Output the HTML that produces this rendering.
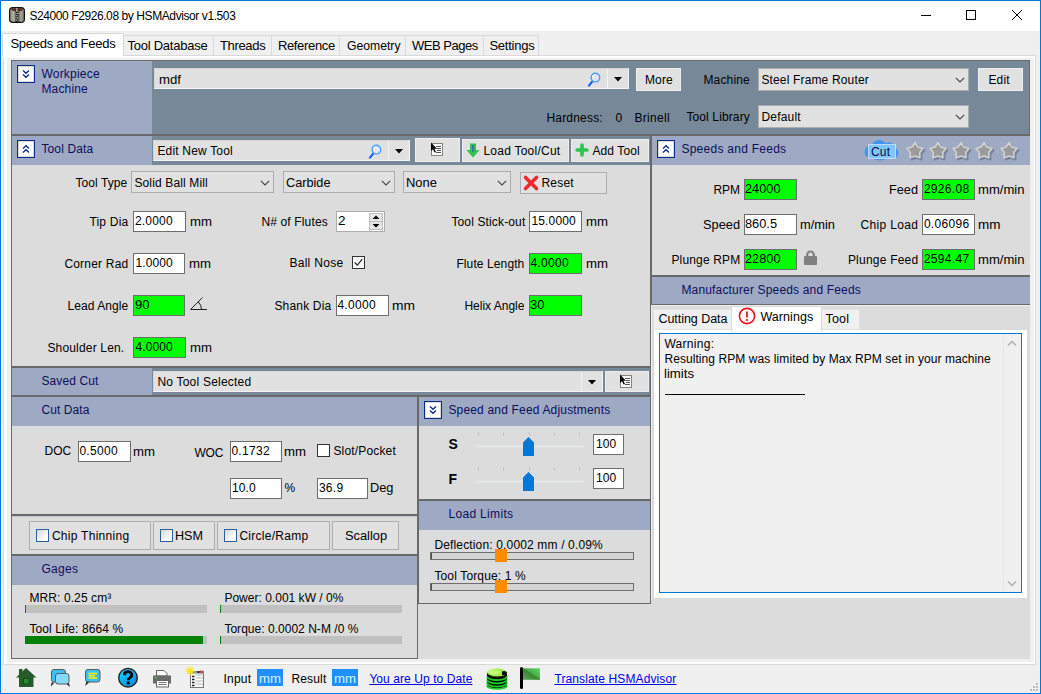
<!DOCTYPE html>
<html><head><meta charset="utf-8"><title>HSMAdvisor</title>
<style>
html,body{margin:0;padding:0;}
body{width:1041px;height:694px;position:relative;overflow:hidden;background:#f0f0f0;font-family:'Liberation Sans', sans-serif;font-size:12px;}
div,svg,.t{position:absolute;}
div{box-sizing:border-box;}
.t{white-space:pre;line-height:16px;}
svg{overflow:visible;}
</style></head><body>
<div style="left:0px;top:0px;width:1041px;height:694px;background:#f0f0f0;"></div>
<div style="left:1px;top:1px;width:1039px;height:30px;background:#ffffff;"></div>
<div style="left:3px;top:55px;width:1033px;height:610px;background:#ffffff;box-shadow:inset 0 0 0 1px #d9d9d9;"></div>
<div style="left:7px;top:58px;width:1027px;height:604px;background:#f0f0f0;"></div>
<div style="left:11px;top:60px;width:1019px;height:599px;background:#dcdcdc;"></div>
<div style="left:123px;top:35px;width:91px;height:21px;background:#f0f0f0;box-shadow:inset 0 0 0 1px #d9d9d9;"></div>
<span class="t" style="left:127.40px;top:38.15px;font-size:13px;font-weight:normal;color:#000;letter-spacing:-0.240px;">Tool Database</span>
<div style="left:213px;top:35px;width:59px;height:21px;background:#f0f0f0;box-shadow:inset 0 0 0 1px #d9d9d9;"></div>
<span class="t" style="left:219.90px;top:38.15px;font-size:13px;font-weight:normal;color:#000;letter-spacing:-0.315px;">Threads</span>
<div style="left:271px;top:35px;width:69px;height:21px;background:#f0f0f0;box-shadow:inset 0 0 0 1px #d9d9d9;"></div>
<span class="t" style="left:277.90px;top:38.15px;font-size:13px;font-weight:normal;color:#000;letter-spacing:-0.332px;">Reference</span>
<div style="left:339px;top:35px;width:67px;height:21px;background:#f0f0f0;box-shadow:inset 0 0 0 1px #d9d9d9;"></div>
<span class="t" style="left:346.90px;top:38.15px;transform:scaleX(0.9373);transform-origin:0 0;font-size:13px;font-weight:normal;color:#000;letter-spacing:0.000px;">Geometry</span>
<div style="left:405px;top:35px;width:79px;height:21px;background:#f0f0f0;box-shadow:inset 0 0 0 1px #d9d9d9;"></div>
<span class="t" style="left:411.90px;top:38.15px;font-size:13px;font-weight:normal;color:#000;letter-spacing:-0.455px;">WEB Pages</span>
<div style="left:483px;top:35px;width:56px;height:21px;background:#f0f0f0;box-shadow:inset 0 0 0 1px #d9d9d9;"></div>
<span class="t" style="left:489.40px;top:38.15px;font-size:13px;font-weight:normal;color:#000;letter-spacing:-0.248px;">Settings</span>
<div style="left:2px;top:33px;width:122px;height:23px;background:#ffffff;box-shadow:inset 0 0 0 1px #d9d9d9;border-bottom:0;"></div>
<div style="left:3px;top:55px;width:120px;height:3px;background:#ffffff;"></div>
<span class="t" style="left:10.40px;top:36.15px;font-size:13px;font-weight:normal;color:#000;letter-spacing:-0.259px;">Speeds and Feeds</span>
<span class="t" style="left:29.40px;top:8.14px;font-size:12px;font-weight:normal;color:#000;letter-spacing:-0.411px;">S24000 F2926.08 by HSMAdvisor v1.503</span>
<svg style="left:9px;top:7px" width="16" height="16" viewBox="0 0 16 16"><defs><linearGradient id="tg" x1="0" y1="0" x2="1" y2="0"><stop offset="0" stop-color="#8a8a7c"/><stop offset="0.3" stop-color="#b4b4a6"/><stop offset="0.45" stop-color="#4a4840"/><stop offset="0.55" stop-color="#4a4840"/><stop offset="0.75" stop-color="#a6a698"/><stop offset="1" stop-color="#76766a"/></linearGradient></defs><rect x="0.6" y="0.6" width="14.8" height="14.8" rx="3.2" fill="url(#tg)" stroke="#141210" stroke-width="1.2"/><path d="M2.5 1.2H13.5V3.2L9.5 4.5H6.5L2.5 3.2Z" fill="#4a2c22"/><rect x="7.3" y="1" width="1.2" height="4" fill="#d8b8a8"/><path d="M8 5V14.5" stroke="#1a1816" stroke-width="2.2"/><path d="M7.6 6.5H9M7 8.7H8.4M7.6 10.9H9M7 13H8.4" stroke="#e8e6da" stroke-width="1.1"/></svg>
<svg style="left:915px;top:5px" width="115" height="22" viewBox="0 0 115 22" fill="none" stroke="#000" stroke-width="1"><path d="M6 10.5H16"/><rect x="51.5" y="5.5" width="9" height="9"/><path d="M97 5L107 15M107 5L97 15"/></svg>
<div style="left:11px;top:60px;width:1019px;height:75px;background:#778899;border:1px solid #696969;box-sizing:border-box;"></div>
<div style="left:12px;top:61px;width:140px;height:73px;background:#9eaac4;"></div>
<svg style="left:17px;top:65px" width="18" height="18" viewBox="0 0 18 18"><rect x="0.5" y="0.5" width="17" height="17" fill="#fff" stroke="#0a2a8c"/><rect x="1.5" y="1.5" width="15" height="15" fill="none" stroke="#dedad4"/><path d="M6 5.5L9 8.3L12 5.5M6 9.5L9 12.3L12 9.5" fill="none" stroke="#0a2a8c" stroke-width="1.35"/></svg>
<span class="t" style="left:41.40px;top:66.14px;font-size:12px;font-weight:normal;color:#0e0e5c;letter-spacing:0.226px;">Workpiece</span>
<span class="t" style="left:41.40px;top:81.14px;font-size:12px;font-weight:normal;color:#0e0e5c;letter-spacing:0.163px;">Machine</span>
<div style="left:154px;top:68px;width:475px;height:21px;background:#e1e1e1;box-shadow:inset -1px -1px 0 #f4f4f4, inset 1px 1px 0 #d6d6d6;"></div>
<div style="left:607px;top:69px;width:1px;height:19px;background:#f4f4f4;"></div>
<svg style="left:614.0px;top:76.8px" width="8" height="5" viewBox="0 0 8 5"><path d="M0 0H8L4 4.6Z" fill="#000"/></svg>
<svg style="left:587px;top:71px" width="16" height="17" viewBox="0 0 16 17"><path d="M5.4 10.4L2 14.6" stroke="#1464ff" stroke-width="2.3" stroke-linecap="round"/><circle cx="8.4" cy="6.6" r="4.3" fill="#e6e6fa" stroke="#4c9cff" stroke-width="1.4"/><path d="M5.6 6A3 3 0 0 1 8 3.6" stroke="#fff" stroke-width="1" fill="none"/></svg>
<span class="t" style="left:158.90px;top:71.64px;transform:scaleX(1.0991);transform-origin:0 0;font-size:12px;font-weight:normal;color:#000;letter-spacing:0.000px;">mdf</span>
<div style="left:636px;top:68px;width:45px;height:23px;background:#e1e1e1;box-shadow:inset 0 0 0 1px #eeeeee;"></div>
<span class="t" style="left:644.90px;top:71.64px;font-size:12px;font-weight:normal;color:#000;letter-spacing:0.164px;">More</span>
<span class="t" style="left:703.40px;top:71.64px;font-size:12px;font-weight:normal;color:#000;letter-spacing:0.163px;">Machine</span>
<div style="left:758px;top:68px;width:211px;height:23px;background:#e1e1e1;box-shadow:inset 0 0 0 1px #adadad;"></div>
<svg style="left:955px;top:77.0px" width="10" height="6" viewBox="0 0 10 6"><path d="M0.8 0.8L5 5L9.2 0.8" fill="none" stroke="#444" stroke-width="1.1"/></svg>
<span class="t" style="left:761.40px;top:71.64px;font-size:12px;font-weight:normal;color:#000;letter-spacing:0.155px;">Steel Frame Router</span>
<div style="left:978px;top:68px;width:45px;height:23px;background:#e1e1e1;box-shadow:inset 0 0 0 1px #eeeeee;"></div>
<span class="t" style="left:988.40px;top:71.64px;font-size:12px;font-weight:normal;color:#000;letter-spacing:0.203px;">Edit</span>
<span class="t" style="left:546.40px;top:109.64px;font-size:12px;font-weight:normal;color:#000;letter-spacing:0.200px;">Hardness:</span>
<span class="t" style="left:615.40px;top:109.64px;font-size:12px;font-weight:normal;color:#000;letter-spacing:0.312px;">0</span>
<span class="t" style="left:634.40px;top:109.64px;font-size:12px;font-weight:normal;color:#000;letter-spacing:0.306px;">Brinell</span>
<span class="t" style="left:686.40px;top:108.64px;font-size:12px;font-weight:normal;color:#000;letter-spacing:0.122px;">Tool Library</span>
<div style="left:758px;top:105px;width:211px;height:23px;background:#e1e1e1;box-shadow:inset 0 0 0 1px #adadad;"></div>
<svg style="left:955px;top:114.0px" width="10" height="6" viewBox="0 0 10 6"><path d="M0.8 0.8L5 5L9.2 0.8" fill="none" stroke="#444" stroke-width="1.1"/></svg>
<span class="t" style="left:761.40px;top:108.64px;font-size:12px;font-weight:normal;color:#000;letter-spacing:0.210px;">Default</span>
<div style="left:11px;top:135px;width:640px;height:232px;background:#dcdcdc;border:1px solid #696969;box-sizing:border-box;"></div>
<div style="left:12px;top:136px;width:638px;height:29px;background:#778899;"></div>
<div style="left:12px;top:136px;width:140px;height:29px;background:#9eaac4;"></div>
<svg style="left:17px;top:140px" width="18" height="18" viewBox="0 0 18 18"><rect x="0.5" y="0.5" width="17" height="17" fill="#fff" stroke="#0a2a8c"/><rect x="1.5" y="1.5" width="15" height="15" fill="none" stroke="#dedad4"/><path d="M6 8.5L9 5.7L12 8.5M6 12.5L9 9.7L12 12.5" fill="none" stroke="#0a2a8c" stroke-width="1.35"/></svg>
<span class="t" style="left:41.40px;top:141.14px;font-size:12px;font-weight:normal;color:#0e0e5c;letter-spacing:0.144px;">Tool Data</span>
<div style="left:153px;top:140px;width:257px;height:21px;background:#e1e1e1;box-shadow:inset -1px -1px 0 #f4f4f4, inset 1px 1px 0 #d6d6d6;"></div>
<div style="left:388px;top:141px;width:1px;height:19px;background:#f4f4f4;"></div>
<svg style="left:395.0px;top:148.8px" width="8" height="5" viewBox="0 0 8 5"><path d="M0 0H8L4 4.6Z" fill="#000"/></svg>
<svg style="left:368px;top:143px" width="16" height="17" viewBox="0 0 16 17"><path d="M5.4 10.4L2 14.6" stroke="#1464ff" stroke-width="2.3" stroke-linecap="round"/><circle cx="8.4" cy="6.6" r="4.3" fill="#e6e6fa" stroke="#4c9cff" stroke-width="1.4"/><path d="M5.6 6A3 3 0 0 1 8 3.6" stroke="#fff" stroke-width="1" fill="none"/></svg>
<span class="t" style="left:157.40px;top:142.64px;font-size:12px;font-weight:normal;color:#000;letter-spacing:0.180px;">Edit New Tool</span>
<div style="left:415px;top:138px;width:45px;height:24px;background:#e1e1e1;box-shadow:inset 0 0 0 1px #eeeeee;"></div>
<svg style="left:430px;top:142px" width="13" height="14" viewBox="0 0 13 14"><rect x="1.5" y="1.5" width="11" height="12" fill="#fbfbfb" stroke="#8a8474"/><path d="M6 4.5H11M7 6.5H11M7 8.5H11M6 10.5H11" stroke="#555" stroke-width="1"/><path d="M1 0.5V9L3 7.2L4.6 10.6L6 10L4.4 6.7H7Z" fill="#000"/></svg>
<div style="left:462px;top:139px;width:107px;height:23px;background:#e1e1e1;box-shadow:inset 0 0 0 1px #eeeeee;"></div>
<span class="t" style="left:483.40px;top:142.64px;font-size:12px;font-weight:normal;color:#000;letter-spacing:0.243px;">Load Tool/Cut</span>
<svg style="left:466px;top:143px" width="14" height="15" viewBox="0 0 14 15"><path d="M4 0.5H10V7H13.5L7 14.5L0.5 7H4Z" fill="#2fc24f"/><path d="M7 2V9" stroke="#4a5ad0" stroke-width="1.6"/></svg>
<div style="left:571px;top:139px;width:78px;height:23px;background:#e1e1e1;box-shadow:inset 0 0 0 1px #eeeeee;"></div>
<span class="t" style="left:592.40px;top:142.64px;font-size:12px;font-weight:normal;color:#000;letter-spacing:0.127px;">Add Tool</span>
<svg style="left:575px;top:143px" width="14" height="14" viewBox="0 0 14 14"><path d="M7 2.2V11.8M2.2 7H11.8" stroke="#2fc24f" stroke-width="3.7" stroke-linecap="round"/></svg>
<span class="t" style="left:75.40px;top:174.64px;font-size:12px;font-weight:normal;color:#000;letter-spacing:0.094px;">Tool Type</span>
<div style="left:131px;top:171px;width:143px;height:22px;background:#e1e1e1;box-shadow:inset 0 0 0 1px #adadad;"></div>
<svg style="left:260px;top:179.5px" width="10" height="6" viewBox="0 0 10 6"><path d="M0.8 0.8L5 5L9.2 0.8" fill="none" stroke="#444" stroke-width="1.1"/></svg>
<span class="t" style="left:134.40px;top:175.14px;font-size:12px;font-weight:normal;color:#000;letter-spacing:0.143px;">Solid Ball Mill</span>
<div style="left:283px;top:171px;width:112px;height:22px;background:#e1e1e1;box-shadow:inset 0 0 0 1px #adadad;"></div>
<svg style="left:381px;top:179.5px" width="10" height="6" viewBox="0 0 10 6"><path d="M0.8 0.8L5 5L9.2 0.8" fill="none" stroke="#444" stroke-width="1.1"/></svg>
<span class="t" style="left:286.40px;top:175.14px;transform:scaleX(1.0587);transform-origin:0 0;font-size:12px;font-weight:normal;color:#000;letter-spacing:0.000px;">Carbide</span>
<div style="left:403px;top:171px;width:108px;height:22px;background:#e1e1e1;box-shadow:inset 0 0 0 1px #adadad;"></div>
<svg style="left:497px;top:179.5px" width="10" height="6" viewBox="0 0 10 6"><path d="M0.8 0.8L5 5L9.2 0.8" fill="none" stroke="#444" stroke-width="1.1"/></svg>
<span class="t" style="left:406.40px;top:175.14px;transform:scaleX(1.0806);transform-origin:0 0;font-size:12px;font-weight:normal;color:#000;letter-spacing:0.000px;">None</span>
<div style="left:520px;top:172px;width:87px;height:22px;background:#e1e1e1;box-shadow:inset 0 0 0 1px #adadad;"></div>
<span class="t" style="left:541.40px;top:175.14px;font-size:12px;font-weight:normal;color:#000;letter-spacing:0.228px;">Reset</span>
<svg style="left:523px;top:175px" width="16" height="16" viewBox="0 0 16 16"><path d="M2.5 2.5L13.5 13.5M13.5 2.5L2.5 13.5" stroke="#f0282d" stroke-width="3.6" stroke-linecap="round"/></svg>
<span class="t" style="left:89.40px;top:213.64px;font-size:12px;font-weight:normal;color:#000;letter-spacing:0.203px;">Tip Dia</span>
<div style="left:133px;top:211px;width:53px;height:21px;background:#fff;box-shadow:inset 0 0 0 1px #6e6e6e;"></div>
<span class="t" style="left:134.90px;top:213.14px;font-size:12px;font-weight:normal;color:#000;letter-spacing:0.216px;">2.0000</span>
<span class="t" style="left:190.40px;top:213.64px;transform:scaleX(1.1000);transform-origin:0 0;font-size:12px;font-weight:normal;color:#000;letter-spacing:0.000px;">mm</span>
<span class="t" style="left:261.40px;top:213.64px;font-size:12px;font-weight:normal;color:#000;letter-spacing:0.150px;">N# of Flutes</span>
<div style="left:336px;top:211px;width:49px;height:21px;background:#fff;box-shadow:inset 0 0 0 1px #adadad;"></div>
<span class="t" style="left:337.90px;top:213.14px;transform:scaleX(1.1215);transform-origin:0 0;font-size:12px;font-weight:normal;color:#000;letter-spacing:0.000px;">2</span>
<div style="left:369px;top:213px;width:14px;height:17px;background:#e8e8e8;box-shadow:inset 0 0 0 1px #bdbdbd;"></div>
<div style="left:369px;top:221px;width:14px;height:1px;background:#bdbdbd;"></div>
<svg style="left:372px;top:215px" width="8" height="13" viewBox="0 0 8 13"><path d="M0.5 4H7.5L4 0.5ZM0.5 9H7.5L4 12.5Z" fill="#000"/></svg>
<span class="t" style="left:451.40px;top:213.64px;font-size:12px;font-weight:normal;color:#000;letter-spacing:0.141px;">Tool Stick-out</span>
<div style="left:529px;top:211px;width:53px;height:21px;background:#fff;box-shadow:inset 0 0 0 1px #6e6e6e;"></div>
<span class="t" style="left:531.40px;top:213.14px;font-size:12px;font-weight:normal;color:#000;letter-spacing:0.158px;">15.0000</span>
<span class="t" style="left:586.40px;top:213.64px;transform:scaleX(1.1000);transform-origin:0 0;font-size:12px;font-weight:normal;color:#000;letter-spacing:0.000px;">mm</span>
<span class="t" style="left:64.40px;top:255.64px;font-size:12px;font-weight:normal;color:#000;letter-spacing:0.197px;">Corner Rad</span>
<div style="left:133px;top:253px;width:52px;height:21px;background:#fff;box-shadow:inset 0 0 0 1px #6e6e6e;"></div>
<span class="t" style="left:135.40px;top:255.14px;font-size:12px;font-weight:normal;color:#000;letter-spacing:0.133px;">1.0000</span>
<span class="t" style="left:189.40px;top:255.64px;transform:scaleX(1.1000);transform-origin:0 0;font-size:12px;font-weight:normal;color:#000;letter-spacing:0.000px;">mm</span>
<span class="t" style="left:289.40px;top:254.64px;font-size:12px;font-weight:normal;color:#000;letter-spacing:0.293px;">Ball Nose</span>
<div style="left:352px;top:256px;width:13px;height:13px;background:#fff;box-shadow:inset 0 0 0 1px #333;"></div>
<svg style="left:352px;top:256px" width="13" height="13" viewBox="0 0 13 13"><path d="M2.8 6.5L5.3 9.2L10.3 3.2" fill="none" stroke="#222" stroke-width="1.2"/></svg>
<span class="t" style="left:456.40px;top:255.64px;font-size:12px;font-weight:normal;color:#000;letter-spacing:0.107px;">Flute Length</span>
<div style="left:529px;top:253px;width:53px;height:21px;background:#00ff00;box-shadow:inset 0 0 0 1px #6e6e6e;"></div>
<span class="t" style="left:530.40px;top:255.14px;font-size:12px;font-weight:normal;color:#000;letter-spacing:0.299px;">4.0000</span>
<span class="t" style="left:586.40px;top:255.64px;transform:scaleX(1.1000);transform-origin:0 0;font-size:12px;font-weight:normal;color:#000;letter-spacing:0.000px;">mm</span>
<span class="t" style="left:67.40px;top:297.64px;font-size:12px;font-weight:normal;color:#000;letter-spacing:0.094px;">Lead Angle</span>
<div style="left:133px;top:295px;width:52px;height:21px;background:#00ff00;box-shadow:inset 0 0 0 1px #6e6e6e;"></div>
<span class="t" style="left:134.90px;top:297.14px;transform:scaleX(1.0854);transform-origin:0 0;font-size:12px;font-weight:normal;color:#000;letter-spacing:0.000px;">90</span>
<svg style="left:189px;top:296px" width="19" height="15" viewBox="0 0 19 15"><path d="M13.5 1.5L1.5 13.5H18" fill="none" stroke="#222" stroke-width="1"/><path d="M9.28 5.72A11 11 0 0 1 12.5 13.5" fill="none" stroke="#222" stroke-width="1"/></svg>
<span class="t" style="left:274.40px;top:297.64px;font-size:12px;font-weight:normal;color:#000;letter-spacing:0.181px;">Shank Dia</span>
<div style="left:336px;top:295px;width:53px;height:21px;background:#fff;box-shadow:inset 0 0 0 1px #6e6e6e;"></div>
<span class="t" style="left:337.40px;top:297.14px;font-size:12px;font-weight:normal;color:#000;letter-spacing:0.299px;">4.0000</span>
<span class="t" style="left:392.40px;top:297.64px;transform:scaleX(1.1500);transform-origin:0 0;font-size:12px;font-weight:normal;color:#000;letter-spacing:0.000px;">mm</span>
<span class="t" style="left:464.40px;top:297.64px;font-size:12px;font-weight:normal;color:#000;letter-spacing:-0.004px;">Helix Angle</span>
<div style="left:529px;top:295px;width:53px;height:21px;background:#00ff00;box-shadow:inset 0 0 0 1px #6e6e6e;"></div>
<span class="t" style="left:530.40px;top:297.14px;transform:scaleX(1.0854);transform-origin:0 0;font-size:12px;font-weight:normal;color:#000;letter-spacing:0.000px;">30</span>
<span class="t" style="left:47.40px;top:339.64px;font-size:12px;font-weight:normal;color:#000;letter-spacing:0.174px;">Shoulder Len.</span>
<div style="left:133px;top:337px;width:53px;height:21px;background:#00ff00;box-shadow:inset 0 0 0 1px #6e6e6e;"></div>
<span class="t" style="left:135.40px;top:339.14px;font-size:12px;font-weight:normal;color:#000;letter-spacing:0.133px;">4.0000</span>
<span class="t" style="left:190.40px;top:339.64px;transform:scaleX(1.1000);transform-origin:0 0;font-size:12px;font-weight:normal;color:#000;letter-spacing:0.000px;">mm</span>
<div style="left:11px;top:367px;width:640px;height:29px;background:#778899;border:1px solid #696969;box-sizing:border-box;"></div>
<div style="left:12px;top:368px;width:140px;height:27px;background:#9eaac4;"></div>
<span class="t" style="left:41.40px;top:373.14px;font-size:12px;font-weight:normal;color:#0e0e5c;letter-spacing:0.106px;">Saved Cut</span>
<div style="left:153px;top:371px;width:450px;height:21px;background:#e1e1e1;box-shadow:inset -1px -1px 0 #f4f4f4, inset 1px 1px 0 #d6d6d6;"></div>
<div style="left:581px;top:372px;width:1px;height:19px;background:#f4f4f4;"></div>
<svg style="left:588.0px;top:379.8px" width="8" height="5" viewBox="0 0 8 5"><path d="M0 0H8L4 4.6Z" fill="#000"/></svg>
<span class="t" style="left:157.40px;top:373.64px;font-size:12px;font-weight:normal;color:#000;letter-spacing:0.218px;">No Tool Selected</span>
<div style="left:605px;top:371px;width:44px;height:21px;background:#e1e1e1;box-shadow:inset 0 0 0 1px #eeeeee;"></div>
<svg style="left:619px;top:374px" width="13" height="14" viewBox="0 0 13 14"><rect x="1.5" y="1.5" width="11" height="12" fill="#fbfbfb" stroke="#8a8474"/><path d="M6 4.5H11M7 6.5H11M7 8.5H11M6 10.5H11" stroke="#555" stroke-width="1"/><path d="M1 0.5V9L3 7.2L4.6 10.6L6 10L4.4 6.7H7Z" fill="#000"/></svg>
<div style="left:11px;top:396px;width:407px;height:119px;background:#dcdcdc;border:1px solid #696969;box-sizing:border-box;"></div>
<div style="left:12px;top:397px;width:405px;height:29px;background:#9eaac4;"></div>
<span class="t" style="left:41.40px;top:402.14px;font-size:12px;font-weight:normal;color:#0e0e5c;letter-spacing:0.080px;">Cut Data</span>
<span class="t" style="left:44.40px;top:443.14px;font-size:12px;font-weight:normal;color:#000;letter-spacing:0.109px;">DOC</span>
<div style="left:78px;top:441px;width:53px;height:21px;background:#fff;box-shadow:inset 0 0 0 1px #6e6e6e;"></div>
<span class="t" style="left:79.40px;top:443.14px;font-size:12px;font-weight:normal;color:#000;letter-spacing:0.299px;">0.5000</span>
<span class="t" style="left:133.40px;top:443.64px;transform:scaleX(1.1000);transform-origin:0 0;font-size:12px;font-weight:normal;color:#000;letter-spacing:0.000px;">mm</span>
<span class="t" style="left:194.40px;top:445.14px;font-size:12px;font-weight:normal;color:#000;letter-spacing:-0.109px;">WOC</span>
<div style="left:230px;top:441px;width:52px;height:21px;background:#fff;box-shadow:inset 0 0 0 1px #6e6e6e;"></div>
<span class="t" style="left:231.40px;top:443.14px;font-size:12px;font-weight:normal;color:#000;letter-spacing:0.299px;">0.1732</span>
<span class="t" style="left:284.40px;top:443.64px;transform:scaleX(1.1000);transform-origin:0 0;font-size:12px;font-weight:normal;color:#000;letter-spacing:0.000px;">mm</span>
<div style="left:317px;top:444px;width:13px;height:13px;background:#fff;box-shadow:inset 0 0 0 1px #333;"></div>
<span class="t" style="left:333.40px;top:443.14px;font-size:12px;font-weight:normal;color:#000;letter-spacing:0.163px;">Slot/Pocket</span>
<div style="left:230px;top:478px;width:52px;height:21px;background:#fff;box-shadow:inset 0 0 0 1px #6e6e6e;"></div>
<span class="t" style="left:231.90px;top:480.14px;font-size:12px;font-weight:normal;color:#000;letter-spacing:0.160px;">10.0</span>
<span class="t" style="left:284.40px;top:479.64px;font-size:12px;font-weight:normal;color:#000;letter-spacing:0.328px;">%</span>
<div style="left:317px;top:478px;width:51px;height:21px;background:#fff;box-shadow:inset 0 0 0 1px #6e6e6e;"></div>
<span class="t" style="left:318.90px;top:480.14px;font-size:12px;font-weight:normal;color:#000;letter-spacing:0.285px;">36.9</span>
<span class="t" style="left:369.90px;top:479.64px;transform:scaleX(1.0674);transform-origin:0 0;font-size:12px;font-weight:normal;color:#000;letter-spacing:0.000px;">Deg</span>
<div style="left:11px;top:515px;width:407px;height:40px;background:#dcdcdc;border:1px solid #696969;box-sizing:border-box;"></div>
<div style="left:12px;top:516px;width:405px;height:1px;background:#c3c8d4;"></div>
<div style="left:29px;top:521px;width:122px;height:29px;background:#e1e1e1;box-shadow:inset 0 0 0 1px #adadad;"></div>
<div style="left:36px;top:529px;width:13px;height:13px;background:#fff;box-shadow:inset 0 0 0 1px #2d5fa0;background:linear-gradient(135deg,#d0d0d0,#ffffff 70%);"></div>
<span class="t" style="left:51.90px;top:527.64px;font-size:12px;font-weight:normal;color:#000;letter-spacing:0.282px;">Chip Thinning</span>
<div style="left:153px;top:521px;width:62px;height:29px;background:#e1e1e1;box-shadow:inset 0 0 0 1px #adadad;"></div>
<div style="left:160px;top:529px;width:13px;height:13px;background:#fff;box-shadow:inset 0 0 0 1px #2d5fa0;background:linear-gradient(135deg,#d0d0d0,#ffffff 70%);"></div>
<span class="t" style="left:175.40px;top:527.64px;transform:scaleX(1.0498);transform-origin:0 0;font-size:12px;font-weight:normal;color:#000;letter-spacing:0.000px;">HSM</span>
<div style="left:217px;top:521px;width:113px;height:29px;background:#e1e1e1;box-shadow:inset 0 0 0 1px #adadad;"></div>
<div style="left:224px;top:529px;width:13px;height:13px;background:#fff;box-shadow:inset 0 0 0 1px #2d5fa0;background:linear-gradient(135deg,#d0d0d0,#ffffff 70%);"></div>
<span class="t" style="left:239.40px;top:527.64px;font-size:12px;font-weight:normal;color:#000;letter-spacing:0.271px;">Circle/Ramp</span>
<div style="left:332px;top:521px;width:67px;height:29px;background:#e1e1e1;box-shadow:inset 0 0 0 1px #adadad;"></div>
<span class="t" style="left:345.40px;top:527.64px;transform:scaleX(1.0671);transform-origin:0 0;font-size:12px;font-weight:normal;color:#000;letter-spacing:0.000px;">Scallop</span>
<div style="left:11px;top:555px;width:407px;height:104px;background:#dcdcdc;border:1px solid #696969;box-sizing:border-box;"></div>
<div style="left:12px;top:556px;width:405px;height:29px;background:#9eaac4;"></div>
<span class="t" style="left:41.40px;top:561.14px;font-size:12px;font-weight:normal;color:#0e0e5c;letter-spacing:0.328px;">Gages</span>
<span class="t" style="left:29.40px;top:589.64px;font-size:12px;font-weight:normal;color:#000;letter-spacing:0.101px;">MRR: 0.25 cm³</span>
<span class="t" style="left:29.40px;top:620.64px;font-size:12px;font-weight:normal;color:#000;letter-spacing:0.114px;">Tool Life: 8664 %</span>
<span class="t" style="left:224.40px;top:589.64px;font-size:12px;font-weight:normal;color:#000;letter-spacing:0.014px;">Power: 0.001 kW / 0%</span>
<span class="t" style="left:224.40px;top:620.64px;font-size:12px;font-weight:normal;color:#000;letter-spacing:0.026px;">Torque: 0.0002 N-M /0 %</span>
<div style="left:25px;top:605px;width:182px;height:8px;background:#c0c0c0;"></div>
<div style="left:25px;top:605px;width:1px;height:8px;background:#008000;"></div>
<div style="left:25px;top:636px;width:182px;height:8px;background:#c0c0c0;"></div>
<div style="left:25px;top:636px;width:178px;height:8px;background:#008000;"></div>
<div style="left:220px;top:605px;width:182px;height:8px;background:#c0c0c0;"></div>
<div style="left:220px;top:605px;width:1px;height:8px;background:#008000;"></div>
<div style="left:220px;top:636px;width:182px;height:8px;background:#c0c0c0;"></div>
<div style="left:220px;top:636px;width:1px;height:8px;background:#008000;"></div>
<div style="left:418px;top:396px;width:233px;height:104px;background:#dcdcdc;border:1px solid #696969;box-sizing:border-box;"></div>
<div style="left:419px;top:397px;width:231px;height:29px;background:#9eaac4;"></div>
<svg style="left:424px;top:401px" width="18" height="18" viewBox="0 0 18 18"><rect x="0.5" y="0.5" width="17" height="17" fill="#fff" stroke="#0a2a8c"/><rect x="1.5" y="1.5" width="15" height="15" fill="none" stroke="#dedad4"/><path d="M6 5.5L9 8.3L12 5.5M6 9.5L9 12.3L12 9.5" fill="none" stroke="#0a2a8c" stroke-width="1.35"/></svg>
<span class="t" style="left:448.40px;top:402.14px;font-size:12px;font-weight:normal;color:#0e0e5c;letter-spacing:0.175px;">Speed and Feed Adjustments</span>
<div style="left:478px;top:432px;width:1px;height:4px;background:#c4c4c4;"></div>
<div style="left:503px;top:432px;width:1px;height:4px;background:#c4c4c4;"></div>
<div style="left:529px;top:432px;width:1px;height:4px;background:#c4c4c4;"></div>
<div style="left:554px;top:432px;width:1px;height:4px;background:#c4c4c4;"></div>
<div style="left:579px;top:432px;width:1px;height:4px;background:#c4c4c4;"></div>
<div style="left:474px;top:445px;width:110px;height:3px;background:#e7eaea;box-shadow:inset 0 0 0 1px #dfe1e1;"></div>
<svg style="left:523px;top:437px" width="11" height="19" viewBox="0 0 11 19"><path d="M0 5.5L5.5 0L11 5.5V19H0Z" fill="#0078d7"/></svg>
<div style="left:478px;top:467px;width:1px;height:4px;background:#c4c4c4;"></div>
<div style="left:503px;top:467px;width:1px;height:4px;background:#c4c4c4;"></div>
<div style="left:529px;top:467px;width:1px;height:4px;background:#c4c4c4;"></div>
<div style="left:554px;top:467px;width:1px;height:4px;background:#c4c4c4;"></div>
<div style="left:579px;top:467px;width:1px;height:4px;background:#c4c4c4;"></div>
<div style="left:474px;top:480px;width:110px;height:3px;background:#e7eaea;box-shadow:inset 0 0 0 1px #dfe1e1;"></div>
<svg style="left:523px;top:472px" width="11" height="19" viewBox="0 0 11 19"><path d="M0 5.5L5.5 0L11 5.5V19H0Z" fill="#0078d7"/></svg>
<span class="t" style="left:448.40px;top:435.66px;font-size:14px;font-weight:bold;color:#000;letter-spacing:-0.344px;">S</span>
<span class="t" style="left:448.40px;top:470.66px;font-size:14px;font-weight:bold;color:#000;letter-spacing:-0.062px;">F</span>
<div style="left:593px;top:434px;width:31px;height:21px;background:#fff;box-shadow:inset 0 0 0 1px #6e6e6e;"></div>
<span class="t" style="left:595.90px;top:436.14px;font-size:12px;font-weight:normal;color:#000;letter-spacing:0.156px;">100</span>
<div style="left:593px;top:468px;width:31px;height:21px;background:#fff;box-shadow:inset 0 0 0 1px #6e6e6e;"></div>
<span class="t" style="left:595.90px;top:470.14px;font-size:12px;font-weight:normal;color:#000;letter-spacing:0.156px;">100</span>
<div style="left:418px;top:500px;width:233px;height:104px;background:#dcdcdc;border:1px solid #696969;box-sizing:border-box;"></div>
<div style="left:419px;top:501px;width:231px;height:29px;background:#9eaac4;"></div>
<span class="t" style="left:448.40px;top:506.14px;font-size:12px;font-weight:normal;color:#0e0e5c;letter-spacing:0.330px;">Load Limits</span>
<span class="t" style="left:434.40px;top:537.14px;font-size:12px;font-weight:normal;color:#000;letter-spacing:0.152px;">Deflection: 0.0002 mm / 0.09%</span>
<span class="t" style="left:434.40px;top:567.64px;font-size:12px;font-weight:normal;color:#000;letter-spacing:0.146px;">Tool Torque: 1 %</span>
<div style="left:430px;top:552px;width:204px;height:8px;background:#d4d4d4;box-shadow:inset 0 0 0 1px #6e6e6e;"></div>
<div style="left:431px;top:553px;width:1px;height:6px;background:#008000;"></div>
<div style="left:495px;top:549px;width:12px;height:13px;background:#ff8c00;"></div>
<div style="left:430px;top:583px;width:204px;height:8px;background:#d4d4d4;box-shadow:inset 0 0 0 1px #6e6e6e;"></div>
<div style="left:431px;top:584px;width:1px;height:6px;background:#008000;"></div>
<div style="left:495px;top:580px;width:12px;height:13px;background:#ff8c00;"></div>
<div style="left:651px;top:135px;width:379px;height:465px;background:#dcdcdc;"></div>
<div style="left:651px;top:135px;width:1px;height:170px;background:#696969;"></div>
<div style="left:651px;top:135px;width:379px;height:1px;background:#696969;"></div>
<div style="left:652px;top:136px;width:378px;height:29px;background:#9eaac4;"></div>
<svg style="left:657px;top:140px" width="18" height="18" viewBox="0 0 18 18"><rect x="0.5" y="0.5" width="17" height="17" fill="#fff" stroke="#0a2a8c"/><rect x="1.5" y="1.5" width="15" height="15" fill="none" stroke="#dedad4"/><path d="M6 8.5L9 5.7L12 8.5M6 12.5L9 9.7L12 12.5" fill="none" stroke="#0a2a8c" stroke-width="1.35"/></svg>
<span class="t" style="left:681.40px;top:141.14px;font-size:12px;font-weight:normal;color:#0e0e5c;letter-spacing:0.266px;">Speeds and Feeds</span>
<svg style="left:864px;top:139px" width="36" height="23" viewBox="0 0 36 23"><defs><linearGradient id="cg" x1="0" y1="0" x2="1" y2="1"><stop offset="0" stop-color="#2f9af0"/><stop offset="1" stop-color="#5b8ef0"/></linearGradient></defs><g fill="url(#cg)"><ellipse cx="8" cy="13" rx="7.5" ry="7"/><ellipse cx="15" cy="7" rx="7" ry="6"/><ellipse cx="25" cy="9" rx="6.5" ry="5.5"/><ellipse cx="29" cy="14" rx="5.5" ry="5.5"/><ellipse cx="16" cy="17" rx="8" ry="4.5"/><rect x="5" y="6" width="24" height="12"/></g><rect x="4.5" y="5.5" width="27" height="14" fill="#8fd4fb" fill-opacity="0.78" stroke="#cfe6fb" stroke-opacity="0.8"/></svg>
<span class="t" style="left:870.90px;top:143.54px;font-size:12px;font-weight:normal;color:#0a0a50;letter-spacing:0.271px;">Cut</span>
<svg style="left:903px;top:139.2px" width="24" height="24" viewBox="-12 -12 24 24"><path d="M0.00 -8.30L2.94 -4.05L7.89 -2.56L4.76 1.55L4.88 6.71L0.00 5.00L-4.88 6.71L-4.76 1.55L-7.89 -2.56L-2.94 -4.05Z" fill="#5c6478" opacity="0.55" stroke="#5c6478" stroke-width="2" stroke-linejoin="round" transform="translate(1.6,1.8)"/><path d="M0.00 -8.30L2.94 -4.05L7.89 -2.56L4.76 1.55L4.88 6.71L0.00 5.00L-4.88 6.71L-4.76 1.55L-7.89 -2.56L-2.94 -4.05Z" fill="#9b9b9b" stroke="#d2d2d2" stroke-width="1.6" stroke-linejoin="round"/></svg>
<svg style="left:926px;top:139.2px" width="24" height="24" viewBox="-12 -12 24 24"><path d="M0.00 -8.30L2.94 -4.05L7.89 -2.56L4.76 1.55L4.88 6.71L0.00 5.00L-4.88 6.71L-4.76 1.55L-7.89 -2.56L-2.94 -4.05Z" fill="#5c6478" opacity="0.55" stroke="#5c6478" stroke-width="2" stroke-linejoin="round" transform="translate(1.6,1.8)"/><path d="M0.00 -8.30L2.94 -4.05L7.89 -2.56L4.76 1.55L4.88 6.71L0.00 5.00L-4.88 6.71L-4.76 1.55L-7.89 -2.56L-2.94 -4.05Z" fill="#9b9b9b" stroke="#d2d2d2" stroke-width="1.6" stroke-linejoin="round"/></svg>
<svg style="left:949px;top:139.2px" width="24" height="24" viewBox="-12 -12 24 24"><path d="M0.00 -8.30L2.94 -4.05L7.89 -2.56L4.76 1.55L4.88 6.71L0.00 5.00L-4.88 6.71L-4.76 1.55L-7.89 -2.56L-2.94 -4.05Z" fill="#5c6478" opacity="0.55" stroke="#5c6478" stroke-width="2" stroke-linejoin="round" transform="translate(1.6,1.8)"/><path d="M0.00 -8.30L2.94 -4.05L7.89 -2.56L4.76 1.55L4.88 6.71L0.00 5.00L-4.88 6.71L-4.76 1.55L-7.89 -2.56L-2.94 -4.05Z" fill="#9b9b9b" stroke="#d2d2d2" stroke-width="1.6" stroke-linejoin="round"/></svg>
<svg style="left:972px;top:139.2px" width="24" height="24" viewBox="-12 -12 24 24"><path d="M0.00 -8.30L2.94 -4.05L7.89 -2.56L4.76 1.55L4.88 6.71L0.00 5.00L-4.88 6.71L-4.76 1.55L-7.89 -2.56L-2.94 -4.05Z" fill="#5c6478" opacity="0.55" stroke="#5c6478" stroke-width="2" stroke-linejoin="round" transform="translate(1.6,1.8)"/><path d="M0.00 -8.30L2.94 -4.05L7.89 -2.56L4.76 1.55L4.88 6.71L0.00 5.00L-4.88 6.71L-4.76 1.55L-7.89 -2.56L-2.94 -4.05Z" fill="#9b9b9b" stroke="#d2d2d2" stroke-width="1.6" stroke-linejoin="round"/></svg>
<svg style="left:996.5px;top:139.2px" width="24" height="24" viewBox="-12 -12 24 24"><path d="M0.00 -8.30L2.94 -4.05L7.89 -2.56L4.76 1.55L4.88 6.71L0.00 5.00L-4.88 6.71L-4.76 1.55L-7.89 -2.56L-2.94 -4.05Z" fill="#5c6478" opacity="0.55" stroke="#5c6478" stroke-width="2" stroke-linejoin="round" transform="translate(1.6,1.8)"/><path d="M0.00 -8.30L2.94 -4.05L7.89 -2.56L4.76 1.55L4.88 6.71L0.00 5.00L-4.88 6.71L-4.76 1.55L-7.89 -2.56L-2.94 -4.05Z" fill="#9b9b9b" stroke="#d2d2d2" stroke-width="1.6" stroke-linejoin="round"/></svg>
<span class="t" style="left:713.40px;top:181.64px;font-size:12px;font-weight:normal;color:#000;letter-spacing:-0.057px;">RPM</span>
<div style="left:744px;top:179px;width:53px;height:21px;background:#00ff00;box-shadow:inset 0 0 0 1px #6e6e6e;"></div>
<span class="t" style="left:745.40px;top:181.14px;transform:scaleX(1.0637);transform-origin:0 0;font-size:12px;font-weight:normal;color:#000;letter-spacing:0.000px;">24000</span>
<span class="t" style="left:889.40px;top:181.64px;transform:scaleX(1.0600);transform-origin:0 0;font-size:12px;font-weight:normal;color:#000;letter-spacing:0.000px;">Feed</span>
<div style="left:922px;top:179px;width:53px;height:21px;background:#00ff00;box-shadow:inset 0 0 0 1px #6e6e6e;"></div>
<span class="t" style="left:923.90px;top:181.14px;font-size:12px;font-weight:normal;color:#000;letter-spacing:0.301px;">2926.08</span>
<span class="t" style="left:977.90px;top:181.64px;transform:scaleX(1.0897);transform-origin:0 0;font-size:12px;font-weight:normal;color:#000;letter-spacing:0.000px;">mm/min</span>
<span class="t" style="left:703.40px;top:216.64px;transform:scaleX(1.0662);transform-origin:0 0;font-size:12px;font-weight:normal;color:#000;letter-spacing:0.000px;">Speed</span>
<div style="left:744px;top:214px;width:53px;height:21px;background:#fff;box-shadow:inset 0 0 0 1px #6e6e6e;"></div>
<span class="t" style="left:745.40px;top:216.14px;transform:scaleX(1.0656);transform-origin:0 0;font-size:12px;font-weight:normal;color:#000;letter-spacing:0.000px;">860.5</span>
<span class="t" style="left:799.90px;top:216.64px;transform:scaleX(1.0713);transform-origin:0 0;font-size:12px;font-weight:normal;color:#000;letter-spacing:0.000px;">m/min</span>
<span class="t" style="left:860.40px;top:216.64px;font-size:12px;font-weight:normal;color:#000;letter-spacing:0.365px;">Chip Load</span>
<div style="left:922px;top:214px;width:53px;height:21px;background:#fff;box-shadow:inset 0 0 0 1px #6e6e6e;"></div>
<span class="t" style="left:923.90px;top:216.14px;font-size:12px;font-weight:normal;color:#000;letter-spacing:0.301px;">0.06096</span>
<span class="t" style="left:977.90px;top:216.64px;transform:scaleX(1.1250);transform-origin:0 0;font-size:12px;font-weight:normal;color:#000;letter-spacing:0.000px;">mm</span>
<span class="t" style="left:671.40px;top:251.64px;font-size:12px;font-weight:normal;color:#000;letter-spacing:0.163px;">Plunge RPM</span>
<div style="left:744px;top:249px;width:53px;height:21px;background:#00ff00;box-shadow:inset 0 0 0 1px #6e6e6e;"></div>
<span class="t" style="left:745.40px;top:251.14px;transform:scaleX(1.0637);transform-origin:0 0;font-size:12px;font-weight:normal;color:#000;letter-spacing:0.000px;">22800</span>
<svg style="left:803px;top:250px" width="15" height="16" viewBox="0 0 15 16"><path d="M4.2 7V4.8A3.3 3.3 0 0 1 10.8 4.8V7" fill="none" stroke="#808080" stroke-width="2.2"/><rect x="1" y="6" width="13" height="9" rx="0.8" fill="#808080"/></svg>
<span class="t" style="left:847.90px;top:251.64px;font-size:12px;font-weight:normal;color:#000;letter-spacing:0.222px;">Plunge Feed</span>
<div style="left:922px;top:249px;width:53px;height:21px;background:#00ff00;box-shadow:inset 0 0 0 1px #6e6e6e;"></div>
<span class="t" style="left:923.90px;top:251.14px;font-size:12px;font-weight:normal;color:#000;letter-spacing:0.301px;">2594.47</span>
<span class="t" style="left:977.90px;top:251.64px;transform:scaleX(1.0897);transform-origin:0 0;font-size:12px;font-weight:normal;color:#000;letter-spacing:0.000px;">mm/min</span>
<div style="left:652px;top:275px;width:378px;height:2px;background:#696969;"></div>
<div style="left:652px;top:277px;width:378px;height:27px;background:#9eaac4;"></div>
<div style="left:652px;top:304px;width:378px;height:1px;background:#696969;"></div>
<span class="t" style="left:681.40px;top:282.14px;font-size:12px;font-weight:normal;color:#0e0e5c;letter-spacing:0.163px;">Manufacturer Speeds and Feeds</span>
<div style="left:651px;top:305px;width:379px;height:295px;background:#dcdcdc;"></div>
<div style="left:651px;top:305px;width:379px;height:1px;background:#f0f0f0;"></div>
<div style="left:651px;top:305px;width:1px;height:295px;background:#f0f0f0;"></div>
<div style="left:653px;top:329px;width:375px;height:270px;background:#ffffff;box-shadow:inset 0 0 0 1px #d9d9d9;"></div>
<div style="left:653px;top:309px;width:79px;height:21px;background:#f0f0f0;box-shadow:inset 0 0 0 1px #e2e2e2;"></div>
<div style="left:821px;top:309px;width:39px;height:21px;background:#f0f0f0;box-shadow:inset 0 0 0 1px #e2e2e2;"></div>
<div style="left:731px;top:306px;width:91px;height:25px;background:#ffffff;box-shadow:inset 0 0 0 1px #d9d9d9;border-bottom:0"></div>
<div style="left:732px;top:328px;width:89px;height:4px;background:#ffffff;"></div>
<span class="t" style="left:658.40px;top:311.14px;font-size:12.5px;font-weight:normal;color:#000;letter-spacing:-0.040px;">Cutting Data</span>
<span class="t" style="left:760.40px;top:309.14px;font-size:12.5px;font-weight:normal;color:#000;letter-spacing:0.082px;">Warnings</span>
<span class="t" style="left:825.40px;top:311.14px;font-size:12.5px;font-weight:normal;color:#000;letter-spacing:0.266px;">Tool</span>
<svg style="left:738px;top:307px" width="18" height="18" viewBox="0 0 18 18"><circle cx="9" cy="9" r="7.6" fill="#fff" stroke="#e8141c" stroke-width="1.6"/><path d="M9 4.5V10.5" stroke="#e8141c" stroke-width="1.8"/><circle cx="9" cy="13" r="1.1" fill="#e8141c"/></svg>
<div style="left:659px;top:333px;width:363px;height:260px;background:#f0f0f0;box-shadow:inset 0 0 0 1px #0078d7;"></div>
<div style="left:1003px;top:334px;width:1px;height:258px;background:#e6e6e6;"></div>
<span class="t" style="left:664.40px;top:335.64px;font-size:12px;font-weight:normal;color:#000;letter-spacing:0.303px;">Warning:</span>
<span class="t" style="left:664.40px;top:350.64px;font-size:12px;font-weight:normal;color:#000;letter-spacing:0.078px;">Resulting RPM was limited by Max RPM set in your machine</span>
<span class="t" style="left:664.40px;top:365.64px;transform:scaleX(1.0978);transform-origin:0 0;font-size:12px;font-weight:normal;color:#000;letter-spacing:0.000px;">limits</span>
<div style="left:665px;top:394px;width:140px;height:1px;background:#000;"></div>
<svg style="left:1007px;top:340px" width="10" height="7" viewBox="0 0 10 7"><path d="M1 5.5L5 1.5L9 5.5" fill="none" stroke="#b4b4b4" stroke-width="1.6"/></svg>
<svg style="left:1007px;top:580px" width="10" height="7" viewBox="0 0 10 7"><path d="M1 1.5L5 5.5L9 1.5" fill="none" stroke="#b4b4b4" stroke-width="1.6"/></svg>
<span class="t" style="left:223.40px;top:671.14px;font-size:12px;font-weight:normal;color:#000;letter-spacing:0.259px;">Input</span>
<div style="left:257px;top:669px;width:26px;height:17px;background:#1e90ff;"></div>
<span class="t" style="left:259.40px;top:670.64px;transform:scaleX(1.1000);transform-origin:0 0;font-size:12px;font-weight:normal;color:#d8f0ff;letter-spacing:0.000px;">mm</span>
<span class="t" style="left:291.40px;top:671.14px;font-size:12px;font-weight:normal;color:#000;letter-spacing:0.164px;">Result</span>
<div style="left:332px;top:669px;width:26px;height:17px;background:#1e90ff;"></div>
<span class="t" style="left:334.40px;top:670.64px;transform:scaleX(1.1000);transform-origin:0 0;font-size:12px;font-weight:normal;color:#d8f0ff;letter-spacing:0.000px;">mm</span>
<span class="t" style="left:369.40px;top:671.14px;font-size:12px;font-weight:normal;color:#0000ee;letter-spacing:0.076px;text-decoration:underline;">You are Up to Date</span>
<span class="t" style="left:554.40px;top:671.14px;font-size:12px;font-weight:normal;color:#0000ee;letter-spacing:0.120px;text-decoration:underline;">Translate HSMAdvisor</span>
<svg style="left:16px;top:668px" width="21" height="20" viewBox="0 0 21 20"><path d="M10 0L20.5 9.5H17.5V19H3V9.5H0Z" fill="#265c2c"/><rect x="3" y="1" width="3.5" height="6" fill="#265c2c"/><rect x="7.5" y="10.5" width="5.5" height="5.5" fill="#1f8f2b" stroke="#1a4a20" stroke-width="1"/></svg>
<svg style="left:50px;top:668px" width="21" height="20" viewBox="0 0 21 20"><path d="M1.5 14.5L1 18.5L4.5 14.5Z" fill="#222"/><path d="M19 15L19.8 19L15.5 15Z" fill="#222"/><rect x="1.5" y="1.5" width="14" height="12.5" rx="2.5" fill="#3cc0f5" stroke="#5a5a5a"/><rect x="5.5" y="5.5" width="13.5" height="10.5" rx="2.5" fill="#86d9fb" stroke="#5a5a5a"/></svg>
<svg style="left:84px;top:668px" width="17" height="19" viewBox="0 0 17 19"><path d="M2.5 13L1.2 18L6 13.5Z" fill="#222"/><rect x="1.5" y="1.5" width="14.5" height="12.5" rx="2.5" fill="#3cc0f5" stroke="#5a5a5a"/><path d="M4.5 5.5H13M4.5 7.8H11M4.5 10H13" stroke="#fff200" stroke-width="1.5"/></svg>
<svg style="left:117px;top:667px" width="22" height="22" viewBox="0 0 22 22"><defs><linearGradient id="hg" x1="0" y1="0" x2="1" y2="1"><stop offset="0" stop-color="#12d6ff"/><stop offset="1" stop-color="#0a84e0"/></linearGradient></defs><circle cx="11" cy="10.7" r="9.3" fill="url(#hg)" stroke="#2a2224" stroke-width="1.4"/><path d="M7.3 8.2C7.3 3.6 14.8 3.6 14.8 8C14.8 10.6 11.2 10.6 11.2 13.2" fill="none" stroke="#000" stroke-width="2.8"/><rect x="9.8" y="14.6" width="2.9" height="2.7" fill="#000"/></svg>
<svg style="left:152px;top:669px" width="20" height="19" viewBox="0 0 20 19"><path d="M4.5 7V1.5H12L15 4.5V7Z" fill="#fff" stroke="#666"/><rect x="1" y="6.5" width="18" height="8" fill="#6a6a6a"/><rect x="4.5" y="11.5" width="12" height="6.5" fill="#fff" stroke="#666"/><path d="M6.5 13.5H14.5M6.5 15.5H14.5" stroke="#777"/><rect x="3" y="8" width="2" height="1.2" fill="#2fe04a"/></svg>
<svg style="left:185px;top:666px" width="21" height="23" viewBox="0 0 21 23"><rect x="5.5" y="5.5" width="13" height="16" fill="#fdfdfd" stroke="#777"/><rect x="5.5" y="5.5" width="13" height="2.2" fill="#9a9a9a"/><path d="M15.2 4.6L17.8 7M17.8 4.6L15.2 7" stroke="#e01818" stroke-width="1"/><rect x="12.5" y="5" width="2" height="2" fill="#222"/><path d="M7 10.5H9.5M7 13.5H9.5M7 16.5H9.5M7 19.5H9.5" stroke="#222" stroke-width="1.4"/><path d="M10.5 9H18M10.5 12H18M10.5 15H18M10.5 18H18" stroke="#bbb" stroke-width="1"/><path d="M5 0.5V9.5M0.5 5H9.5M1.8 1.8L8.2 8.2M8.2 1.8L1.8 8.2" stroke="#f8e71c" stroke-width="1.4"/></svg>
<svg style="left:486px;top:668px" width="22" height="21" viewBox="0 0 22 21"><path d="M1 4.5V16.5A10 4 0 0 0 21 16.5V4.5Z" fill="#0a0a0a"/><ellipse cx="11" cy="4.5" rx="10" ry="4" fill="#9bf04a"/><ellipse cx="8" cy="4" rx="6" ry="2.6" fill="#c4ff7a"/><path d="M1 8.2A10 4 0 0 0 21 8.2M1 11.4A10 4 0 0 0 21 11.4M1 14.6A10 4 0 0 0 21 14.6M1 17.4A10 3.6 0 0 0 21 17.4" fill="none" stroke="#18d41e" stroke-width="1.7"/><path d="M16 3.5A3 2 0 0 1 21 5V7H16Z" fill="#0a0a0a"/></svg>
<svg style="left:519px;top:666px" width="23" height="24" viewBox="0 0 23 24"><defs><linearGradient id="fg" x1="0" y1="1" x2="1" y2="0"><stop offset="0" stop-color="#57a84c"/><stop offset="0.5" stop-color="#3a8430"/><stop offset="0.55" stop-color="#48b04a"/><stop offset="1" stop-color="#5fd86a"/></linearGradient></defs><rect x="4" y="2.3" width="17" height="11.5" fill="url(#fg)"/><rect x="1" y="1" width="3" height="22" rx="1.5" fill="#000"/></svg>
<svg style="left:1028px;top:681px" width="12" height="12" viewBox="0 0 12 12" fill="#bcbcbc" shape-rendering="crispEdges"><rect x="8" y="8" width="2" height="2"/><rect x="5" y="8" width="2" height="2"/><rect x="2" y="8" width="2" height="2"/><rect x="8" y="5" width="2" height="2"/><rect x="5" y="5" width="2" height="2"/><rect x="8" y="2" width="2" height="2"/></svg>
<div style="left:0px;top:0px;width:1041px;height:694px;box-shadow:inset 0 0 0 1px #0078d7;pointer-events:none;"></div>
</body></html>
